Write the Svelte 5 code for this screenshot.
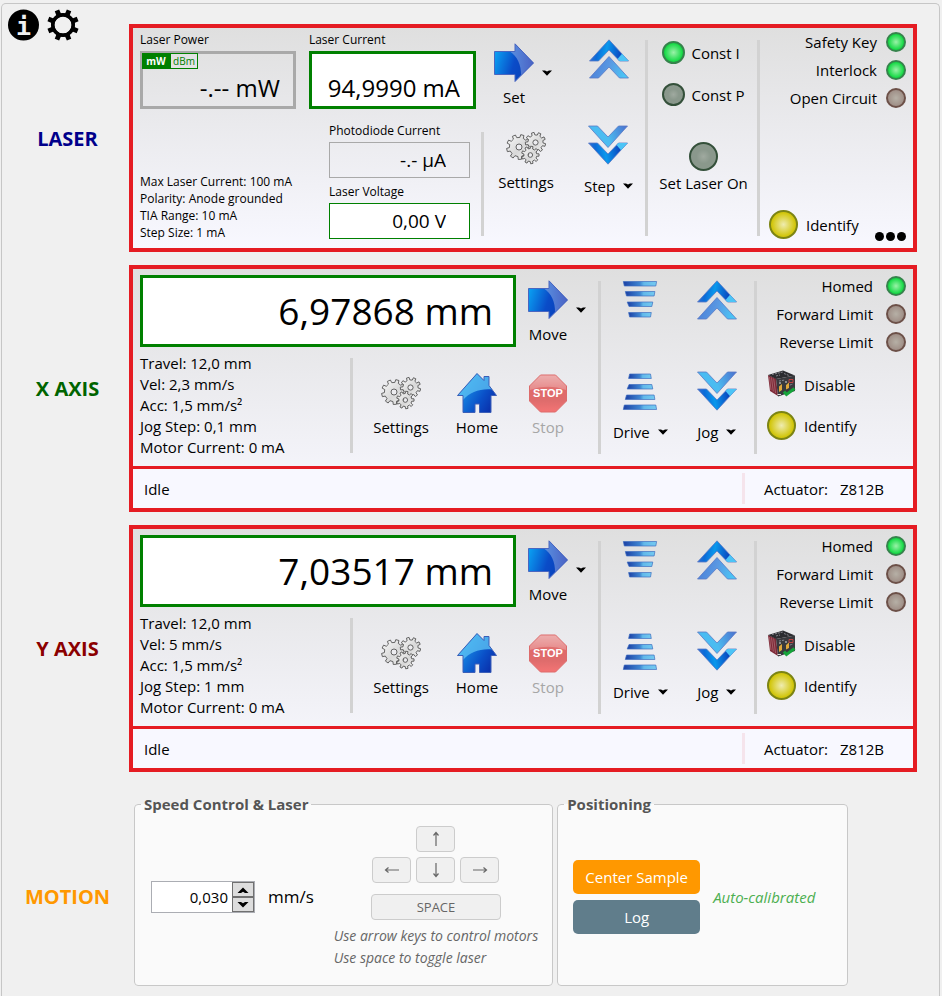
<script>
  const laserInfo = [
    'Max Laser Current: 100 mA',
    'Polarity: Anode grounded',
    'TIA Range: 10 mA',
    'Step Size: 1 mA'
  ];

  const interlocks = [
    { name: 'Safety Key', on: true },
    { name: 'Interlock', on: true },
    { name: 'Open Circuit', on: false }
  ];

  const limits = [
    { name: 'Homed', on: true },
    { name: 'Forward Limit', on: false },
    { name: 'Reverse Limit', on: false }
  ];

  const axes = [
    {
      id: 'x',
      title: 'X AXIS',
      position: '6,97868 mm',
      info: ['Travel: 12,0 mm', 'Vel: 2,3 mm/s', 'Acc: 1,5 mm/s²', 'Jog Step: 0,1 mm', 'Motor Current: 0 mA']
    },
    {
      id: 'y',
      title: 'Y AXIS',
      position: '7,03517 mm',
      info: ['Travel: 12,0 mm', 'Vel: 5 mm/s', 'Acc: 1,5 mm/s²', 'Jog Step: 1 mm', 'Motor Current: 0 mA']
    }
  ];

  let mode = $state('I');
  let unit = $state('mW');
  let speed = $state('0,030');

  function nudge(step) {
    const next = Math.max(0, parseFloat(speed.replace(',', '.')) + step);
    speed = next.toFixed(3).replace('.', ',');
  }

  // Outline of a cog: n teeth between root radius r and tip radius R.
  function cog(cx, cy, R, r, n, turn = 0) {
    const pts = [];
    const step = (Math.PI * 2) / n;
    for (let i = 0; i < n; i++) {
      const a = i * step + turn;
      for (const [f, rad] of [[-0.27, r], [-0.19, R], [0.19, R], [0.27, r]]) {
        const t = a + f * step;
        pts.push(`${(cx + rad * Math.cos(t)).toFixed(2)} ${(cy + rad * Math.sin(t)).toFixed(2)}`);
      }
    }
    return 'M' + pts.join('L') + 'Z';
  }

  const hole = (cx, cy, r) => `M${cx - r} ${cy}a${r} ${r} 0 1 0 ${2 * r} 0a${r} ${r} 0 1 0 ${-2 * r} 0Z`;
</script>

{#snippet caret()}
  <svg class="caret" width="10" height="6" viewBox="0 0 10 6" aria-hidden="true">
    <path d="M0 0.5H3L5 1.5L7 0.5H10L5 5.8Z" fill="#000" />
  </svg>
{/snippet}

{#snippet arrowIcon()}
  <svg width="40" height="40" viewBox="0 0 40 40" aria-hidden="true">
    <path d="M0.5 8.5H21V0.8L39.5 20L21 38.5V31.5H0.5Z" fill="url(#arrowFill)" />
    <path d="M21 1L39.5 20L27 32.5C27.500 22 23 13 16 8.5H21Z" fill="url(#arrowGloss)" />
    <path d="M0.5 8.5H21V0.8L39.5 20L21 38.5V31.5H0.5Z" fill="none" stroke="#4a66c0" stroke-width="1" />
  </svg>
{/snippet}

{#snippet chevrons(down)}
  <svg width="40" height="40" viewBox="0 0 40 40" aria-hidden="true">
    <g transform={down ? 'matrix(1 0 0 -1 0 40)' : undefined} stroke="#5a78c4" stroke-width="0.8">
      <path d="M20 0.8L39.5 22H30.500L20 11L9.500 22H0.5Z" fill="url(#chevStrong)" />
      <path d="M28.500 20L33 14.800L39.5 22H30.500Z" fill="#4cc4f6" stroke="none" />
      <path d="M20 17.5L39.5 39H30.500L20 28L9.500 39H0.5Z" fill={down ? 'url(#chevSoftDown)' : 'url(#chevSoft)'} />
    </g>
  </svg>
{/snippet}

{#snippet bars(down)}
  <svg width="40" height="40" viewBox="0 0 40 40" aria-hidden="true">
    <g transform={down ? 'matrix(1 0 0 -1 0 40)' : undefined} fill="url(#barFill)" stroke="#3f6fc0" stroke-width="0.7">
      <path d="M3.3 1.5H36.6L35.8 6H4.3Z" />
      <path d="M5.3 11.5H34.9L34.1 16H6.5Z" />
      <path d="M7.2 22H32.8L31.8 26.5H9Z" />
      <path d="M8.6 32.5H31.3L30.5 37H9.6Z" />
    </g>
  </svg>
{/snippet}

{#snippet gears()}
  <svg width="40" height="40" viewBox="0 0 40 40" aria-hidden="true">
    <g fill="url(#steel)" stroke="#555" stroke-width="0.9" fill-rule="evenodd" stroke-linejoin="round">
      <path d={cog(13, 19, 12.5, 9.6, 9, 0.1) + hole(13, 19, 3)} />
      <path d={cog(29.5, 14.5, 10.2, 7.6, 9, 0.25) + hole(29.5, 14.5, 2.6)} />
      <path d={cog(24.3, 27, 8.8, 6.5, 9, 0) + hole(24.3, 27, 2.3)} />
    </g>
  </svg>
{/snippet}

{#snippet homeIcon()}
  <svg width="40" height="40" viewBox="0 0 40 40" aria-hidden="true">
    <path d="M20 0.5L27 7.5V3.5H32V12.5L39.5 22.5H34V39.5H22.5V31H18V39.5H6V22.5H0.5Z" fill="url(#houseFill)" />
    <path d="M20 0.5L27 7.5V3.5H32V12.5L35 16.5C23 15.5 13 19 6 27V22.5H0.5Z" fill="#5fc4f4" opacity="0.75" />
    <path d="M20 0.5L27 7.5V3.5H32V12.5L39.5 22.5H34V39.5H22.5V31H18V39.5H6V22.5H0.5Z" fill="none" stroke="#3c5fb8" stroke-width="1" />
  </svg>
{/snippet}

{#snippet stopIcon()}
  <svg width="40" height="40" viewBox="0 0 40 40" aria-hidden="true">
    <path d="M12.5 2H27.5L38.5 13V28L27.5 39H12.5L1.5 28V13Z" fill="url(#stopFill)" stroke="#dd6b6b" stroke-width="1" />
    <path d="M12.5 2.5H27.5L38 13V17C27 12.5 13 12.5 2 17V13Z" fill="#fff" opacity="0.22" />
    <text x="20" y="24" text-anchor="middle" font-family="'Liberation Sans', sans-serif" font-size="11" font-weight="700" fill="#fff">STOP</text>
  </svg>
{/snippet}

{#snippet controllerIcon()}
  <svg width="29" height="29" viewBox="0 0 29 29" aria-hidden="true">
    <path d="M1 5L9 8.5L11 26L3 21Z" fill="#7c2836" />
    <path d="M2.5 7L4 20M4.5 7.5L6.3 21.5M6.7 8.5L8.5 23" stroke="#c08088" stroke-width="0.6" />
    <path d="M1 5L16 0.5L28 5.5L9 9Z" fill="#2c2c30" />
    <path d="M9 9L28 5.5V21L11 26.5Z" fill="#39393d" />
    <path d="M5 4.5L16 2M9 6L13 5M17 3.5L22 5.5M12 11L18 10M20 16L26 14" stroke="#8e8e96" stroke-width="0.9" stroke-dasharray="2 1" />
    <path d="M22 9.5H26V12.5H22Z" fill="none" stroke="#c44" stroke-width="0.9" />
    <path d="M12 16.5L15 14V20L12 22ZM19 15L22 12.5V18L19 19.5Z" fill="#e0a63a" />
    <path d="M12 13H14M18 12H20M10.5 24.5H14" stroke="#ddd" stroke-width="1" />
    <path d="M17 21.5L19.500 24.500L27.500 18.500" fill="none" stroke="#15a33a" stroke-width="3" />
  </svg>
{/snippet}

{#snippet statusList(items)}
  <ul class="status-list">
    {#each items as item}
      <li>{item.name}<span class="led small" class:green={item.on} class:dim-red={!item.on}></span></li>
    {/each}
  </ul>
{/snippet}

{#snippet keyArrow(turn)}
  <svg width="16" height="16" viewBox="0 0 16 16" aria-hidden="true">
    <path d="M1 8H14.500M11.500 5.500L14.500 8L11.500 10.500" transform="rotate({turn} 8 8)" fill="none" stroke="#666" stroke-width="1.2" />
  </svg>
{/snippet}

<svg class="defs" width="0" height="0" aria-hidden="true">
  <defs>
    <linearGradient id="arrowFill" x1="0" y1="0" x2="1" y2="0.3">
      <stop offset="0" stop-color="#0aacf8" /><stop offset="0.6" stop-color="#0a4cc8" /><stop offset="1" stop-color="#0a40b8" />
    </linearGradient>
    <linearGradient id="arrowGloss" x1="0" y1="0" x2="1" y2="0">
      <stop offset="0" stop-color="#5a90e0" /><stop offset="1" stop-color="#4a62c4" />
    </linearGradient>
    <linearGradient id="chevStrong" x1="0" y1="0.6" x2="1" y2="0.7">
      <stop offset="0" stop-color="#3a6cd0" /><stop offset="0.2" stop-color="#0a6cd8" /><stop offset="0.42" stop-color="#0a98ec" /><stop offset="0.8" stop-color="#0a48c0" />
    </linearGradient>
    <linearGradient id="chevSoft" x1="0" y1="0.6" x2="1" y2="0.8">
      <stop offset="0" stop-color="#4a80d8" /><stop offset="0.45" stop-color="#5a98e2" /><stop offset="1" stop-color="#48ccf8" />
    </linearGradient>
    <linearGradient id="chevSoftDown" x1="0" y1="0.6" x2="1" y2="0.8">
      <stop offset="0" stop-color="#48bcf4" /><stop offset="0.45" stop-color="#4cbcf0" /><stop offset="1" stop-color="#4a74d0" />
    </linearGradient>
    <linearGradient id="barFill" x1="0" y1="0" x2="1" y2="0">
      <stop offset="0" stop-color="#1c40a4" /><stop offset="0.5" stop-color="#3e86d2" /><stop offset="0.62" stop-color="#62b8ea" /><stop offset="1" stop-color="#74caf0" />
    </linearGradient>
    <linearGradient id="steel" x1="0" y1="0" x2="1" y2="1">
      <stop offset="0" stop-color="#fafafa" /><stop offset="0.55" stop-color="#d8d8d8" /><stop offset="1" stop-color="#f4f4f4" />
    </linearGradient>
    <linearGradient id="houseFill" x1="0" y1="0.3" x2="1" y2="0.9">
      <stop offset="0" stop-color="#1ca0ee" /><stop offset="0.6" stop-color="#0a50c8" /><stop offset="1" stop-color="#0a28a4" />
    </linearGradient>
    <linearGradient id="stopFill" x1="0" y1="0" x2="0" y2="1">
      <stop offset="0" stop-color="#e89898" /><stop offset="0.4" stop-color="#e06a6a" /><stop offset="0.7" stop-color="#df6c6c" /><stop offset="1" stop-color="#f47474" />
    </linearGradient>
  </defs>
</svg>

<main class="frame">
  <div class="tools">
    <button class="plain" aria-label="Information">
      <svg width="32" height="32" viewBox="0 0 32 32" aria-hidden="true">
        <circle cx="15.5" cy="16" r="15.5" />
        <text x="15.5" y="25.5" text-anchor="middle" font-family="'DejaVu Sans Mono', monospace" font-size="25" font-weight="700" fill="#f0f0f0">i</text>
      </svg>
    </button>
    <button class="plain" aria-label="Preferences">
      <svg width="32" height="32" viewBox="0 0 32 32" aria-hidden="true">
        <path d={cog(16, 16, 16, 11.6, 8, Math.PI / 8) + hole(16, 16, 8.6)} fill-rule="evenodd" />
        <path d={hole(16, 16, 12) + hole(16, 16, 8.6)} fill-rule="evenodd" />
      </svg>
    </button>
  </div>

  <h2 class="title laser-title">LASER</h2>
  <section class="panel laser" aria-label="Laser">
    <div class="laser-main">
      <div class="readings">
        <div class="reading power">
          <label for="laser-power">Laser Power</label>
          <div class="boxed">
            <input id="laser-power" class="readout medium idle" value="-.-- mW" readonly />
            <div class="units">
              <button class:active={unit === 'mW'} onclick={() => (unit = 'mW')}>mW</button>
              <button class:active={unit === 'dBm'} onclick={() => (unit = 'dBm')}>dBm</button>
            </div>
          </div>
        </div>
        <div class="reading current">
          <label for="laser-current">Laser Current</label>
          <input id="laser-current" class="readout medium" value="94,9990 mA" readonly />
        </div>
      </div>
      <div class="details">
        <ul class="info fine">
          {#each laserInfo as line}<li>{line}</li>{/each}
        </ul>
        <div class="minor">
          <div class="reading">
            <label for="photodiode">Photodiode Current</label>
            <input id="photodiode" class="readout slim idle" value="-.- µA" readonly />
          </div>
          <div class="reading">
            <label for="voltage">Laser Voltage</label>
            <input id="voltage" class="readout slim" value="0,00 V" readonly />
          </div>
        </div>
      </div>
    </div>
    <div class="rule half"></div>
    <div class="laser-actions">
      <div class="stack">
        <button class="plain action split">{@render arrowIcon()}<span>Set</span>{@render caret()}</button>
        <button class="plain action">{@render gears()}<span>Settings</span></button>
      </div>
      <div class="stack steps">
        <button class="plain" aria-label="Step up">{@render chevrons(false)}</button>
        <button class="plain action menu">{@render chevrons(true)}<span>Step {@render caret()}</span></button>
      </div>
    </div>
    <div class="rule"></div>
    <div class="modes">
      <div class="radios">
        <label><input type="radio" name="mode" value="I" bind:group={mode} class="led mid" />Const I</label>
        <label><input type="radio" name="mode" value="P" bind:group={mode} class="led mid" />Const P</label>
      </div>
      <button class="plain action"><span class="led big dim-green"></span><span>Set Laser On</span></button>
    </div>
    <div class="rule"></div>
    <div class="side">
      {@render statusList(interlocks)}
      <div class="bottom">
        <button class="plain row"><span class="led big yellow"></span>Identify</button>
        <button class="plain more" aria-label="More"><i></i><i></i><i></i></button>
      </div>
    </div>
  </section>

  {#each axes as axis}
    <h2 class="title {axis.id}-title">{axis.title}</h2>
    <section class="panel" aria-label={axis.title}>
      <div class="axis">
        <div class="axis-main">
          <div class="axis-top">
            <input class="readout large" aria-label="{axis.title} position" value={axis.position} readonly />
            <button class="plain action split">{@render arrowIcon()}<span>Move</span>{@render caret()}</button>
          </div>
          <div class="axis-low">
            <ul class="info">
              {#each axis.info as line}<li>{line}</li>{/each}
            </ul>
            <div class="rule short"></div>
            <div class="axis-actions">
              <button class="plain action">{@render gears()}<span>Settings</span></button>
              <button class="plain action">{@render homeIcon()}<span>Home</span></button>
              <button class="plain action" disabled>{@render stopIcon()}<span>Stop</span></button>
            </div>
          </div>
        </div>
        <div class="rule"></div>
        <div class="jogging">
          <div class="stack">
            <button class="plain" aria-label="Drive forward">{@render bars(false)}</button>
            <button class="plain action menu">{@render bars(true)}<span>Drive {@render caret()}</span></button>
          </div>
          <div class="stack">
            <button class="plain" aria-label="Jog forward">{@render chevrons(false)}</button>
            <button class="plain action menu">{@render chevrons(true)}<span>Jog {@render caret()}</span></button>
          </div>
        </div>
        <div class="rule"></div>
        <div class="side">
          {@render statusList(limits)}
          <div class="commands">
            <button class="plain row">{@render controllerIcon()}Disable</button>
            <button class="plain row"><span class="led big yellow"></span>Identify</button>
          </div>
        </div>
      </div>
      <footer>
        <span class="state">Idle</span>
        <span class="actuator"><span>Actuator:</span><span>Z812B</span></span>
      </footer>
    </section>
  {/each}

  <h2 class="title motion-title">MOTION</h2>
  <section class="motion" aria-label="Motion">
    <fieldset>
      <legend>Speed Control &amp; Laser</legend>
      <div class="group speed">
        <div class="spin">
          <input id="speed" bind:value={speed} inputmode="decimal" />
          <div class="arrows">
            <button aria-label="Increase speed" onclick={() => nudge(0.001)}>
              <svg width="12" height="6" viewBox="0 0 12 6"><path d="M0.5 6L6 0.5L11.5 6H8L6 4.8L4 6Z" /></svg>
            </button>
            <button aria-label="Decrease speed" onclick={() => nudge(-0.001)}>
              <svg width="12" height="6" viewBox="0 0 12 6"><path d="M0.5 0L6 5.5L11.5 0H8L6 1.2L4 0Z" /></svg>
            </button>
          </div>
        </div>
        <label class="unit" for="speed">mm/s</label>
        <div class="keys">
          <div class="pad">
            <button class="key up" aria-label="Up">{@render keyArrow(-90)}</button>
            <button class="key" aria-label="Left">{@render keyArrow(180)}</button>
            <button class="key" aria-label="Down">{@render keyArrow(90)}</button>
            <button class="key" aria-label="Right">{@render keyArrow(0)}</button>
          </div>
          <button class="key space">SPACE</button>
          <p>Use arrow keys to control motors<br />Use space to toggle laser</p>
        </div>
      </div>
    </fieldset>
    <fieldset>
      <legend>Positioning</legend>
      <div class="group positioning">
        <div class="buttons">
          <button class="center">Center Sample</button>
          <button class="log">Log</button>
        </div>
        <em>Auto-calibrated</em>
      </div>
    </fieldset>
  </section>
</main>

<style>
  :global(body) {
    background: #f0f0f0;
  }
  .defs {
    position: absolute;
  }
  .frame,
  .frame * {
    box-sizing: border-box;
  }
  .frame {
    display: grid;
    grid-template-columns: 123px minmax(0, 1fr);
    grid-template-rows: 20px;
    align-content: start;
    min-height: calc(100vh - 3px);
    margin: 3px 2px 0 1px;
    padding: 0 22px 0 4px;
    border: 1px solid #c6c6c6;
    border-bottom: 0;
    border-radius: 5px 5px 0 0;
    color: #000;
    font: 15px/20px 'Open Sans', 'Noto Sans', sans-serif;
  }
  button,
  input {
    font: inherit;
    color: inherit;
    margin: 0;
  }
  ul,
  p,
  h2 {
    margin: 0;
    padding: 0;
    list-style: none;
  }
  svg {
    display: block;
    flex: none;
  }
  .plain {
    padding: 0;
    border: 0;
    background: none;
  }
  .tools {
    grid-area: 1 / 1 / 3 / 2;
    align-self: start;
    display: flex;
    gap: 7px;
    padding: 5px 0 0 2px;
  }

  .title {
    grid-column: 1;
    align-self: center;
    margin-bottom: 12px;
    text-align: center;
    font-size: 20px;
    line-height: 28px;
    font-weight: 700;
  }
  .laser-title {
    grid-row: 2;
    color: #00008b;
  }
  .x-title {
    color: #006400;
  }
  .y-title {
    color: #8b0000;
  }
  .motion-title {
    margin: 22px 0 0;
    color: #ff9800;
  }

  .panel {
    grid-column: 2;
    margin-bottom: 13px;
    border: 4px solid #e51c23;
    background: linear-gradient(#dfdfdf, #f8f8ff);
  }
  .laser {
    grid-row: 2;
    display: flex;
  }
  .laser-main {
    flex: 1;
    min-width: 0;
    padding: 4px 0 7px 7px;
  }
  .readings {
    display: flex;
    gap: 13px;
    padding-right: 5px;
  }
  .reading {
    display: flex;
    flex-direction: column;
    gap: 3px;
    min-width: 0;
    font-size: 12px;
    line-height: 16px;
  }
  .reading label {
    white-space: nowrap;
  }
  .power {
    flex: 14;
  }
  .current {
    flex: 15;
  }
  .boxed {
    position: relative;
  }
  .readout {
    display: block;
    width: 100%;
    min-width: 0;
    border: 2px solid #008000;
    border-radius: 0;
    background: #fff;
    text-align: right;
  }
  .medium {
    height: 58px;
    padding: 14px 13px 0 0;
    border-width: 3px;
    font-size: 24px;
  }
  .slim {
    height: 36px;
    padding: 0 23px 0 0;
    border-width: 1px;
    font-size: 19px;
  }
  .large {
    flex: 1;
    height: 72px;
    padding: 0 20px 2px 0;
    border-width: 3px;
    font-size: 37px;
  }
  .idle {
    border-color: #a9a9a9;
    background: transparent;
  }
  .units {
    position: absolute;
    top: 2px;
    left: 2px;
    display: flex;
  }
  .units button {
    width: 28px;
    height: 16px;
    padding: 0;
    border: 1px solid #008000;
    background: none;
    color: #008000;
    font-size: 10px;
    line-height: 14px;
  }
  .units .active {
    background: #008000;
    color: #fff;
    font-weight: 700;
  }
  .details {
    display: flex;
    justify-content: space-between;
    align-items: flex-end;
    padding: 14px 11px 0 0;
  }
  .info {
    flex: 1;
    line-height: 21px;
    white-space: nowrap;
  }
  .info.fine {
    font-size: 12px;
    line-height: 17px;
  }
  .minor {
    display: flex;
    flex-direction: column;
    gap: 6px;
    width: 141px;
    padding-bottom: 2px;
  }

  .rule {
    width: 3px;
    margin: 12px 0;
    background: #d2d2d2;
  }
  .half {
    margin-top: 104px;
  }
  .short {
    margin: 5px 0;
  }
  .laser-actions {
    display: grid;
    grid-template-columns: 84px 77px;
  }
  .stack {
    display: flex;
    flex-direction: column;
    align-items: center;
  }
  .laser-actions .stack {
    gap: 21px;
    padding-top: 15px;
  }
  .laser-actions .steps {
    gap: 46px;
    padding: 11px 0 0 4px;
  }
  .action {
    display: flex;
    flex-direction: column;
    align-items: center;
    gap: 4px;
    white-space: nowrap;
  }
  .action:disabled {
    color: #a6a6a6;
  }
  .split {
    display: grid;
    grid-template-columns: 40px 16px;
    column-gap: 8px;
    justify-items: center;
    align-content: start;
  }
  .split span {
    grid-row: 2;
  }
  .split .caret {
    grid-area: 1 / 2;
    justify-self: start;
    align-self: end;
    margin-bottom: 7px;
  }
  .menu {
    gap: 11px;
  }
  .menu span {
    display: flex;
    align-items: center;
    gap: 8px;
  }

  .led {
    display: block;
    flex: none;
    appearance: none;
    width: 20px;
    height: 20px;
    border: 2px solid;
    border-radius: 50%;
  }
  .mid {
    width: 23px;
    height: 23px;
  }
  .big {
    width: 29px;
    height: 29px;
  }
  .green,
  .mid:checked {
    border-color: #36834c;
    background: radial-gradient(circle, #9af2a8, #14d944 68%);
  }
  .dim-green,
  .mid:not(:checked) {
    border-color: #34503a;
    background: radial-gradient(circle, #a0aaa0, #8a988c 40%);
  }
  .dim-red {
    border-color: #6c5048;
    background: radial-gradient(circle, #b6b0a6, #a09088 68%);
  }
  .yellow {
    border-color: #7c8414;
    background: radial-gradient(circle, #efecb0, #d2c60c 66%);
  }

  .modes {
    display: flex;
    flex-direction: column;
    align-items: center;
    gap: 36px;
    width: 109px;
    padding: 13px 0 0 2px;
  }
  .modes .action {
    gap: 2px;
  }
  .radios {
    display: grid;
    gap: 19px;
  }
  .radios label {
    display: flex;
    align-items: center;
    gap: 6px;
  }
  .side {
    display: flex;
    flex-direction: column;
    width: 153px;
    padding: 4px 7px 9px 9px;
  }
  .axis .side {
    width: 156px;
    padding: 7px 7px 0 10px;
  }
  .status-list {
    display: grid;
    gap: 8px;
  }
  .status-list li {
    display: flex;
    justify-content: flex-end;
    gap: 9px;
    white-space: nowrap;
  }
  .axis .status-list li {
    gap: 13px;
  }
  .row {
    display: flex;
    align-items: center;
    gap: 8px;
  }
  .bottom {
    display: flex;
    justify-content: space-between;
    align-items: flex-end;
    margin-top: auto;
  }
  .more {
    display: flex;
    gap: 2px;
    margin-bottom: -2px;
  }
  .more i {
    width: 9px;
    height: 9px;
    border-radius: 50%;
    background: #000;
  }

  .axis {
    display: flex;
    height: 197px;
  }
  .axis-main {
    flex: 1;
    min-width: 0;
    padding: 6px 0 0 7px;
  }
  .axis-top {
    display: flex;
    gap: 12px;
    padding-right: 6px;
  }
  .axis-top .action {
    padding-top: 5px;
  }
  .axis-low {
    display: flex;
    padding-top: 6px;
  }
  .axis-actions {
    display: grid;
    grid-template-columns: 76px 76px 66px;
    justify-content: center;
    align-items: start;
    width: 245px;
    padding: 20px 7px 0 0;
  }
  .jogging {
    display: grid;
    grid-template-columns: 1fr 1fr;
    gap: 2px;
    width: 153px;
    padding-left: 2px;
  }
  .jogging .stack {
    gap: 51px;
    padding-top: 11px;
  }
  .commands {
    display: grid;
    justify-items: start;
    gap: 12px;
    margin-top: 18px;
  }
  footer {
    display: flex;
    height: 42px;
    border-top: 3px solid #e51c23;
    background: #f8f8ff;
    line-height: 40px;
  }
  .state {
    flex: 1;
    padding-left: 11px;
  }
  .actuator {
    display: flex;
    gap: 12px;
    margin: 4px 0;
    padding: 0 29px 0 19px;
    border-left: 3px solid #f5e4ec;
    line-height: 32px;
  }

  .motion {
    grid-column: 2;
    display: flex;
    gap: 4px;
    margin: 9px 0 0 5px;
  }
  fieldset {
    display: block;
    min-width: 0;
    min-height: 192px;
    margin: 0;
    padding: 0 6px;
    border: 1px solid #c8c8c8;
    border-radius: 4px;
    background: #fafafa;
  }
  legend {
    padding: 0 3px;
    color: #555;
    font-size: 15px;
    font-weight: 700;
  }
  .group {
    display: flex;
    align-items: center;
    height: 166px;
  }
  .speed {
    padding: 0 8px 0 10px;
  }
  .positioning {
    gap: 13px;
    padding: 0 26px 0 9px;
  }
  .spin {
    display: flex;
    width: 104px;
    height: 32px;
    border: 1px solid #abadb3;
    background: #fff;
  }
  .spin input {
    flex: 1;
    min-width: 0;
    padding: 0 4px 0 0;
    border: 0;
    background: none;
    text-align: right;
  }
  .arrows {
    display: grid;
    width: 22px;
  }
  .arrows button {
    display: grid;
    place-items: center;
    padding: 0;
    border: 1px solid #707070;
    background: #ddd;
  }
  .unit {
    margin: 0 20px 0 13px;
    font-size: 17px;
  }
  .keys {
    display: flex;
    flex-direction: column;
    align-items: center;
  }
  .pad {
    display: grid;
    grid-template-columns: repeat(3, 39px);
    gap: 5px;
  }
  .key {
    display: grid;
    place-items: center;
    height: 26px;
    padding: 0;
    border: 1px solid #ccc;
    border-radius: 4px;
    background: #f0f0f0;
    color: #666;
  }
  .up {
    grid-column: 2;
  }
  .up + .key {
    grid-column: 1;
  }
  .space {
    width: 130px;
    margin: 11px 0 5px;
    font-size: 13px;
  }
  .keys p {
    color: #666;
    font-size: 14px;
    line-height: 22px;
    font-style: italic;
    white-space: nowrap;
  }
  .buttons {
    display: grid;
    gap: 6px;
    width: 127px;
  }
  .buttons button {
    height: 34px;
    padding: 0;
    border: 0;
    border-radius: 5px;
    color: #fff;
  }
  .center {
    background: #ff9800;
  }
  .log {
    background: #607d8b;
  }
  em {
    color: #4caf50;
    font-size: 15px;
  }
</style>
